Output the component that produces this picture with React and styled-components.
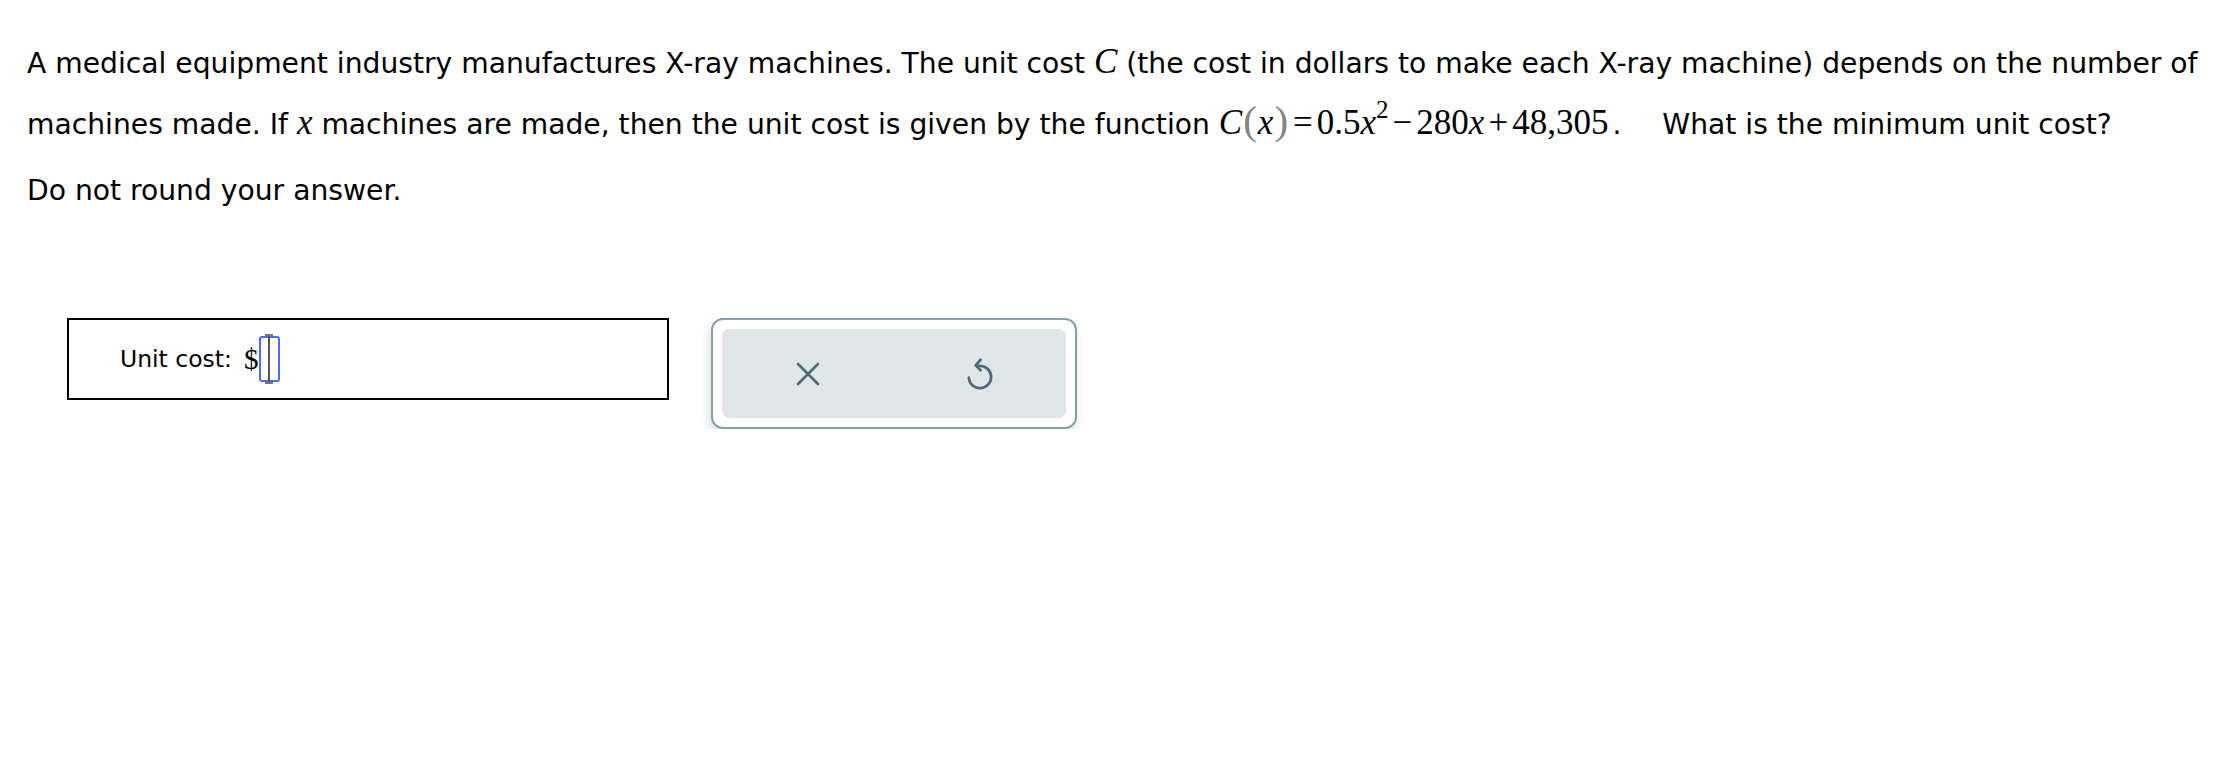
import styled, { createGlobalStyle } from 'styled-components';

const GlobalStyle = createGlobalStyle`
  body {
    margin: 0;
    background: #fff;
    font-family: 'DejaVu Sans', Verdana, sans-serif;
    color: #000;
  }
`;

const Page = styled.div`
  padding: 33px 27px 0;
`;

const Para = styled.p`
  margin: 0;
  font-size: 28.2px;
  line-height: 61px;
  white-space: nowrap;
`;

const Note = styled(Para)`
  margin-top: 5px;
`;

const MathVar = styled.span`
  font-family: 'Liberation Serif', 'Times New Roman', serif;
  font-style: italic;
  font-size: 35px;
  line-height: 0;
`;

const MathNum = styled.span`
  font-family: 'Liberation Serif', 'Times New Roman', serif;
  font-size: 35px;
  line-height: 0;
  margin-right: ${(p) => (p.$last ? '4px' : '0')};
`;

const Op = styled.span`
  font-family: 'Liberation Serif', 'Times New Roman', serif;
  font-size: 35px;
  line-height: 0;
  margin: 0 4px;
`;

const Paren = styled.span`
  font-family: 'Liberation Serif', serif;
  font-size: 41px;
  line-height: 0;
  color: #858585;
  margin: 0 1px;
`;

const Sup = styled.sup`
  font-family: 'Liberation Serif', serif;
  font-size: 25px;
  vertical-align: 16px;
  line-height: 0;
`;

const Stop = styled.span`
  margin-right: 32px;
`;

const AnswerRow = styled.div`
  display: flex;
  align-items: flex-start;
  gap: 42px;
  margin: 97px 0 0 40px;
`;

const AnswerBox = styled.div`
  height: 78px;
  border: 2px solid #000;
  display: flex;
  align-items: center;
  padding-left: 51px;
  box-sizing: content-box;
  width: 547px;
`;

const Label = styled.span`
  font-size: 23.5px;
  margin-right: 12px;
`;

const Dollar = styled.span`
  font-family: 'Liberation Serif', serif;
  font-size: 29px;
`;

const Field = styled.span`
  position: relative;
  display: inline-block;
  width: 17px;
  height: 42px;
  border: 2px solid #4a6cf7;
  border-radius: 3px;
  margin-left: 1px;
`;

const Caret = styled.span`
  position: absolute;
  left: 7px;
  top: -4px;
  width: 2px;
  height: 50px;
  background: #555;
  &::before,
  &::after {
    content: '';
    position: absolute;
    left: -3px;
    width: 8px;
    height: 2px;
    background: #777;
  }
  &::before { top: 0; }
  &::after { bottom: 0; }
`;

const ButtonGroup = styled.div`
  width: 344px;
  padding: 9px;
  border: 2px solid #85a0ab;
  border-radius: 12px;
  background: #fff;
  box-shadow: -2px 5px 10px rgba(60, 80, 90, 0.18);
`;

const ButtonTray = styled.div`
  display: flex;
  height: 89px;
  background: #e0e5e8;
  border-radius: 7px;
`;

const IconButton = styled.button`
  flex: 1;
  border: none;
  background: transparent;
  display: flex;
  align-items: center;
  justify-content: center;
  color: #4d6b77;
  padding: 0;
  cursor: pointer;
`;

function CloseIcon() {
  return (
    <svg width="24" height="24" viewBox="0 0 24 24" fill="none" stroke="currentColor" strokeWidth="2.6" strokeLinecap="round">
      <path d="M2 2 L22 22 M22 2 L2 22" />
    </svg>
  );
}

function UndoIcon() {
  return (
    <svg width="30" height="36" viewBox="0 0 24 29" fill="none" stroke="currentColor" strokeWidth="2.2" strokeLinecap="round" strokeLinejoin="round">
      <path d="M11 8 A9 9 0 1 1 3 17.5" />
      <path d="M12.5 3 L8.5 7.5 L12.5 11.5" />
    </svg>
  );
}

export default function App() {
  return (
    <>
      <GlobalStyle />
      <Page>
        <Para>
          A medical equipment industry manufactures X-ray machines. The unit cost <MathVar>C</MathVar> (the cost in
          dollars to make each X-ray machine) depends on the number of
        </Para>
        <Para>
          machines made. If <MathVar>x</MathVar> machines are made, then the unit cost is given by the function{' '}
          <MathVar>C</MathVar>
          <Paren>(</Paren>
          <MathVar>x</MathVar>
          <Paren>)</Paren>
          <Op>=</Op>
          <MathNum>0.5</MathNum>
          <MathVar>x</MathVar>
          <Sup>2</Sup>
          <Op>−</Op>
          <MathNum>280</MathNum>
          <MathVar>x</MathVar>
          <Op>+</Op>
          <MathNum $last>48,305</MathNum>
          <Stop>.</Stop> What is the minimum unit cost?
        </Para>
        <Note>Do not round your answer.</Note>
        <AnswerRow>
          <AnswerBox>
            <Label>Unit cost:</Label>
            <Dollar>$</Dollar>
            <Field>
              <Caret />
            </Field>
          </AnswerBox>
          <ButtonGroup>
            <ButtonTray>
              <IconButton aria-label="Clear">
                <CloseIcon />
              </IconButton>
              <IconButton aria-label="Undo">
                <UndoIcon />
              </IconButton>
            </ButtonTray>
          </ButtonGroup>
        </AnswerRow>
      </Page>
    </>
  );
}
